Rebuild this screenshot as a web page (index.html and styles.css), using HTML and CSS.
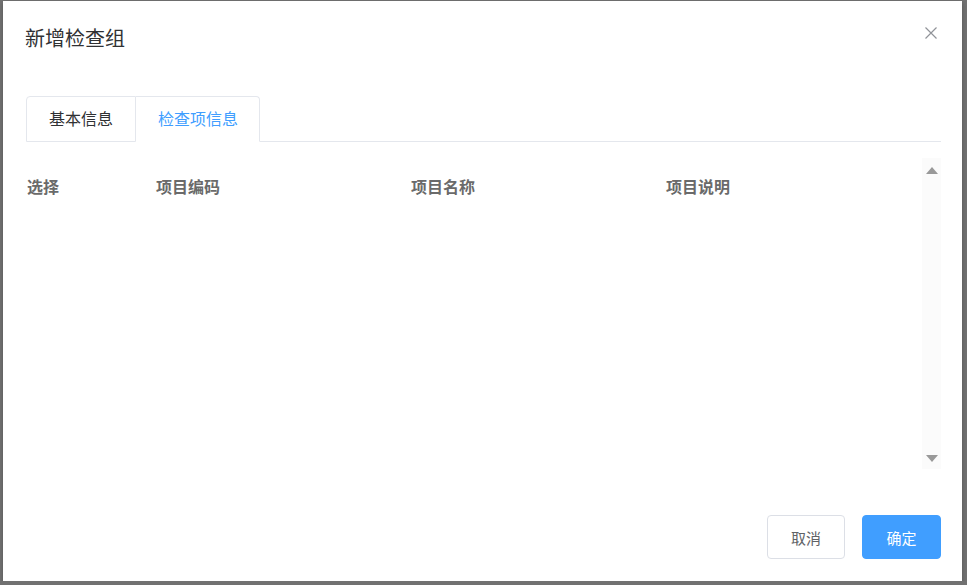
FILE: index.html
```html
<!DOCTYPE html>
<html lang="zh-CN">
<head>
    <meta charset="UTF-8">
    <title>新增检查组</title>
    <link rel="stylesheet" href="styles.css">
</head>
<body>
    <div class="dialog">
        <div class="dialog-header">
            <span class="dialog-title">新增检查组</span>
            <button class="dialog-close" aria-label="关闭">
                <svg width="12" height="12" viewBox="0 0 12 12"><path d="M0.5 0.5 L11.5 11.5 M11.5 0.5 L0.5 11.5" stroke="#909399" stroke-width="1.2" fill="none"/></svg>
            </button>
        </div>
        <div class="dialog-body">
            <div class="tabs">
                <div class="tab">基本信息</div>
                <div class="tab active">检查项信息</div>
                <div class="tabs-rest"></div>
            </div>
            <div class="table-wrap">
                <div class="table">
                    <div class="table-head">
                        <div class="cell col-select">选择</div>
                        <div class="cell col-wide">项目编码</div>
                        <div class="cell col-wide">项目名称</div>
                        <div class="cell col-wide">项目说明</div>
                    </div>
                    <div class="table-body"></div>
                </div>
                <div class="scrollbar">
                    <span class="arrow up"></span>
                    <span class="arrow down"></span>
                </div>
            </div>
        </div>
        <div class="dialog-footer">
            <button class="btn">取消</button>
            <button class="btn btn-primary">确定</button>
        </div>
    </div>
</body>
</html>
```

FILE: styles.css
```css
body {
    margin: 0;
    padding: 0;
    background-color: #717171; /* 遮罩层 */
    font-family: "Liberation Sans", "Noto Sans CJK SC", sans-serif;
    overflow: hidden;
}
.dialog {
    position: relative;
    width: 959px;
    height: 580px;
    margin: 1px 0 0 3px;
    background-color: #fff;
    box-shadow: 0 2px 4px rgba(0, 0, 0, 0.25);
    display: flex;
    flex-direction: column;
    box-sizing: border-box;
}
.dialog-header {
    padding: 26px 23px 0 22px;
    height: 24px;
}
.dialog-title {
    font-size: 20px;
    line-height: 24px;
    color: #303133;
}
.dialog-close {
    position: absolute;
    top: 26px;
    right: 25px;
    width: 12px;
    height: 12px;
    padding: 0;
    border: none;
    background: none;
    cursor: pointer;
    display: flex;
}
.dialog-body {
    padding: 45px 21px 0 23px;
}
.tabs {
    display: flex;
    height: 46px;
}
.tab {
    padding: 0 22px;
    line-height: 45px;
    font-size: 16px;
    color: #303133;
    border: 1px solid #E4E7ED;
    border-left: none;
    white-space: nowrap;
}
.tab:first-child {
    border-left: 1px solid #E4E7ED;
    border-top-left-radius: 4px;
}
.tab.active {
    padding-right: 21px;
    color: #409EFF;
    border-bottom-color: #fff;
    border-top-right-radius: 4px;
}
.tabs-rest {
    flex: 1;
    border-bottom: 1px solid #E4E7ED;
}
.table-wrap {
    display: flex;
    height: 311px;
    margin-top: 16px;
}
.table {
    flex: 1;
}
.table-head {
    display: flex;
    height: 56px;
    align-items: center;
}
.cell {
    padding: 0 10px;
    font-size: 16px;
    font-weight: bold;
    color: #6a6a6a;
    box-sizing: border-box;
}
.col-select {
    width: 120px;
    padding-left: 1px;
}
.col-wide {
    width: 255px;
}
.scrollbar {
    width: 19px;
    background-color: #fbfbfb;
    display: flex;
    flex-direction: column;
    justify-content: space-between;
    align-items: center;
    padding: 9px 0 7px;
    box-sizing: border-box;
}
.arrow {
    width: 0;
    height: 0;
    border-left: 6px solid transparent;
    border-right: 6px solid transparent;
}
.arrow.up {
    border-bottom: 7px solid #999;
}
.arrow.down {
    border-top: 7px solid #999;
}
.dialog-footer {
    margin-top: auto;
    padding: 0 21px 22px 0;
    display: flex;
    justify-content: flex-end;
    gap: 17px;
}
.btn {
    width: 78px;
    height: 44px;
    border: 1px solid #DCDFE6;
    border-radius: 4px;
    background-color: #fff;
    color: #606266;
    font-family: inherit;
    font-size: 15px;
    cursor: pointer;
}
.btn-primary {
    width: 79px;
    background-color: #409EFF;
    border-color: #409EFF;
    color: #fff;
}
```
